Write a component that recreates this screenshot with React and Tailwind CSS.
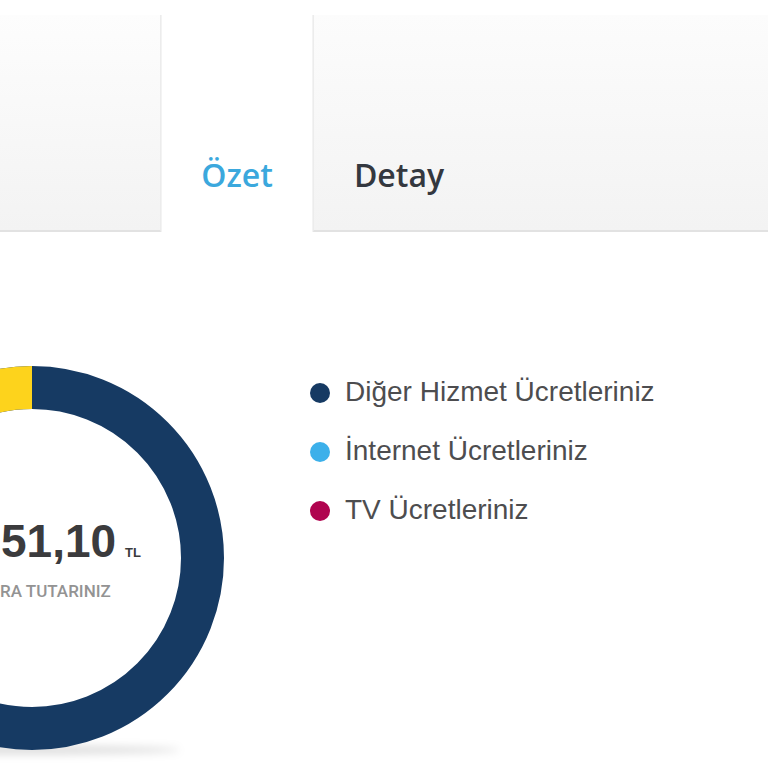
import React from "react";

function Donut() {
  return (
    <div className="relative w-[384px] h-[384px] shrink-0 -ml-[160px]">
      <div className="absolute left-[20px] top-[380px] w-[320px] h-[8px] rounded-[50%] bg-black/15 blur-[4px]" />
      <svg width="384" height="384" viewBox="0 0 384 384" className="relative block">
        <circle cx="192" cy="192" r="170.5" fill="none" stroke="#163a63" strokeWidth="43" />
        <path d="M 119.94 37.48 A 170.5 170.5 0 0 1 192 21.5" fill="none" stroke="#fdd31c" strokeWidth="43" />
      </svg>
      <div className="absolute right-[83px] top-[152px] flex items-baseline gap-[9px] whitespace-nowrap">
        <span className="font-['Liberation_Sans',Arial,sans-serif] font-bold text-[46px] leading-none text-[#3b3b3d]">51,10</span>
        <span className="font-['Liberation_Sans',Arial,sans-serif] font-bold text-[13px] leading-none text-[#3b3b3d]">TL</span>
      </div>
      <div className="absolute left-[160px] top-[216px] whitespace-nowrap font-['Roboto',sans-serif] font-medium text-[17px] leading-[18px] text-[#939393]">
        RA TUTARINIZ
      </div>
    </div>
  );
}

function LegendItem({ color, label }) {
  return (
    <div className="flex items-center h-[20px] gap-[15px]">
      <span className={`w-[20px] h-[20px] rounded-full shrink-0 ${color}`} />
      <span className="font-['Liberation_Sans',Arial,sans-serif] text-[28px] leading-[20px] -mt-[3px] text-[#4d4d4f] whitespace-nowrap">{label}</span>
    </div>
  );
}

export default function App() {
  return (
    <div className="w-[768px] h-[768px] bg-white overflow-hidden relative">
      <div className="pt-[15px] flex h-[232px]">
        <div className="w-[161px] h-full bg-gradient-to-b from-[#fdfdfd] to-[#f3f3f3] border-b-2 border-[#e2e2e2] border-r border-r-[#ececec]" />
        <div className="w-[152px] h-full bg-white flex items-end justify-center pb-[40px] shadow-[inset_1px_0_0_#f3f3f3,inset_-1px_0_0_#f3f3f3]">
          <span className="font-['Open_Sans',sans-serif] font-semibold text-[32px] leading-[35px] text-[#3ba8dd]">Özet</span>
        </div>
        <div className="flex-1 h-full bg-gradient-to-b from-[#fcfcfc] to-[#f3f3f3] border-b-2 border-[#e2e2e2] border-l border-l-[#ececec] flex items-end pb-[38px]">
          <div className="w-[170px] flex justify-center">
            <span className="font-['Open_Sans',sans-serif] font-semibold text-[32px] leading-[35px] text-[#34383f]">Detay</span>
          </div>
        </div>
      </div>
      <div className="flex items-start mt-[134px]">
        <Donut />
        <div className="ml-[86px] mt-[17px] flex flex-col gap-[39px]">
          <LegendItem color="bg-[#163a63]" label="Diğer Hizmet Ücretleriniz" />
          <LegendItem color="bg-[#3cb0ea]" label="İnternet Ücretleriniz" />
          <LegendItem color="bg-[#b0044f]" label="TV Ücretleriniz" />
        </div>
      </div>
    </div>
  );
}
